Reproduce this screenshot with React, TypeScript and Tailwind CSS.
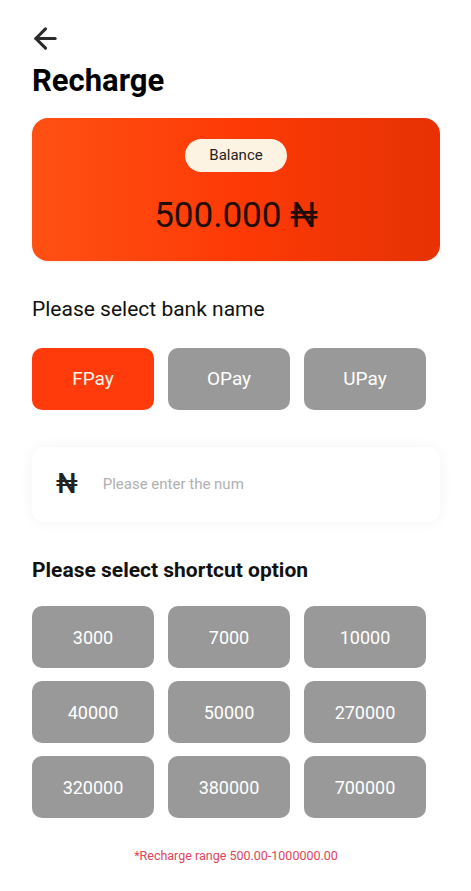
import { ArrowLeft } from 'lucide-react';

const banks = ['FPay', 'OPay', 'UPay'];
const shortcuts = ['3000', '7000', '10000', '40000', '50000', '270000', '320000', '380000', '700000'];

export default function App() {
  const selectedBank = 'FPay';

  return (
    <div className="min-h-[891px] w-full bg-white px-8 font-['Roboto',sans-serif] text-[#111]">
      <div className="pt-[22px]">
        <ArrowLeft size={33} strokeWidth={2.3} className="-ml-[3px] text-[#2b2b2b]" />
      </div>
      <h1 className="mt-[8px] text-[31px] font-bold leading-[36px] text-black">Recharge</h1>

      <section className="mt-[19px] flex h-[143px] w-[408px] flex-col items-center rounded-[16px] bg-gradient-to-r from-[#ff5012] via-[#fd3a06] to-[#e63204] pt-[21px] shadow-[0_1px_3px_rgba(0,0,0,0.08)]">
        <div className="flex h-[33px] w-[102px] items-center justify-center rounded-full bg-[#fdf3e3] text-[15px] text-[#222]">
          Balance
        </div>
        <p className="mt-[24px] text-[35px] leading-[40px] text-[#1e0c06]">500.000 ₦</p>
      </section>

      <h2 className="mt-[34px] text-[21px] leading-[28px] text-[#111]">Please select bank name</h2>

      <div className="mt-[25px] grid w-[394px] grid-cols-3 gap-x-[14px]">
        {banks.map((bank) => (
          <button
            key={bank}
            type="button"
            className={
              bank === selectedBank
                ? 'flex h-[62px] items-center justify-center rounded-[10px] bg-[#ff3b0b] text-[19px] text-[#fff4ea]'
                : 'flex h-[62px] items-center justify-center rounded-[10px] bg-[#999999] text-[19px] text-white'
            }
          >
            {bank}
          </button>
        ))}
      </div>

      <div className="mt-[37px] flex h-[75px] w-[408px] items-center rounded-[12px] bg-white px-[24px] shadow-[0_0_14px_rgba(0,0,0,0.05)]">
        <span className="text-[27px] font-medium leading-none text-[#222]">₦</span>
        <span className="ml-[25px] text-[15px] text-[#b0b0b0]">Please enter the num</span>
      </div>

      <h2 className="mt-[34px] text-[21px] font-bold leading-[28px] text-[#111]">Please select shortcut option</h2>

      <div className="mt-[22px] grid w-[394px] grid-cols-3 gap-x-[14px] gap-y-[13px]">
        {shortcuts.map((amount) => (
          <button
            key={amount}
            type="button"
            className="flex h-[62px] items-center justify-center rounded-[10px] bg-[#999999] text-[18px] text-white"
          >
            {amount}
          </button>
        ))}
      </div>

      <p className="mt-[29px] w-[408px] text-center text-[12.5px] text-[#e0455a]">
        *Recharge range 500.00-1000000.00
      </p>
    </div>
  );
}
